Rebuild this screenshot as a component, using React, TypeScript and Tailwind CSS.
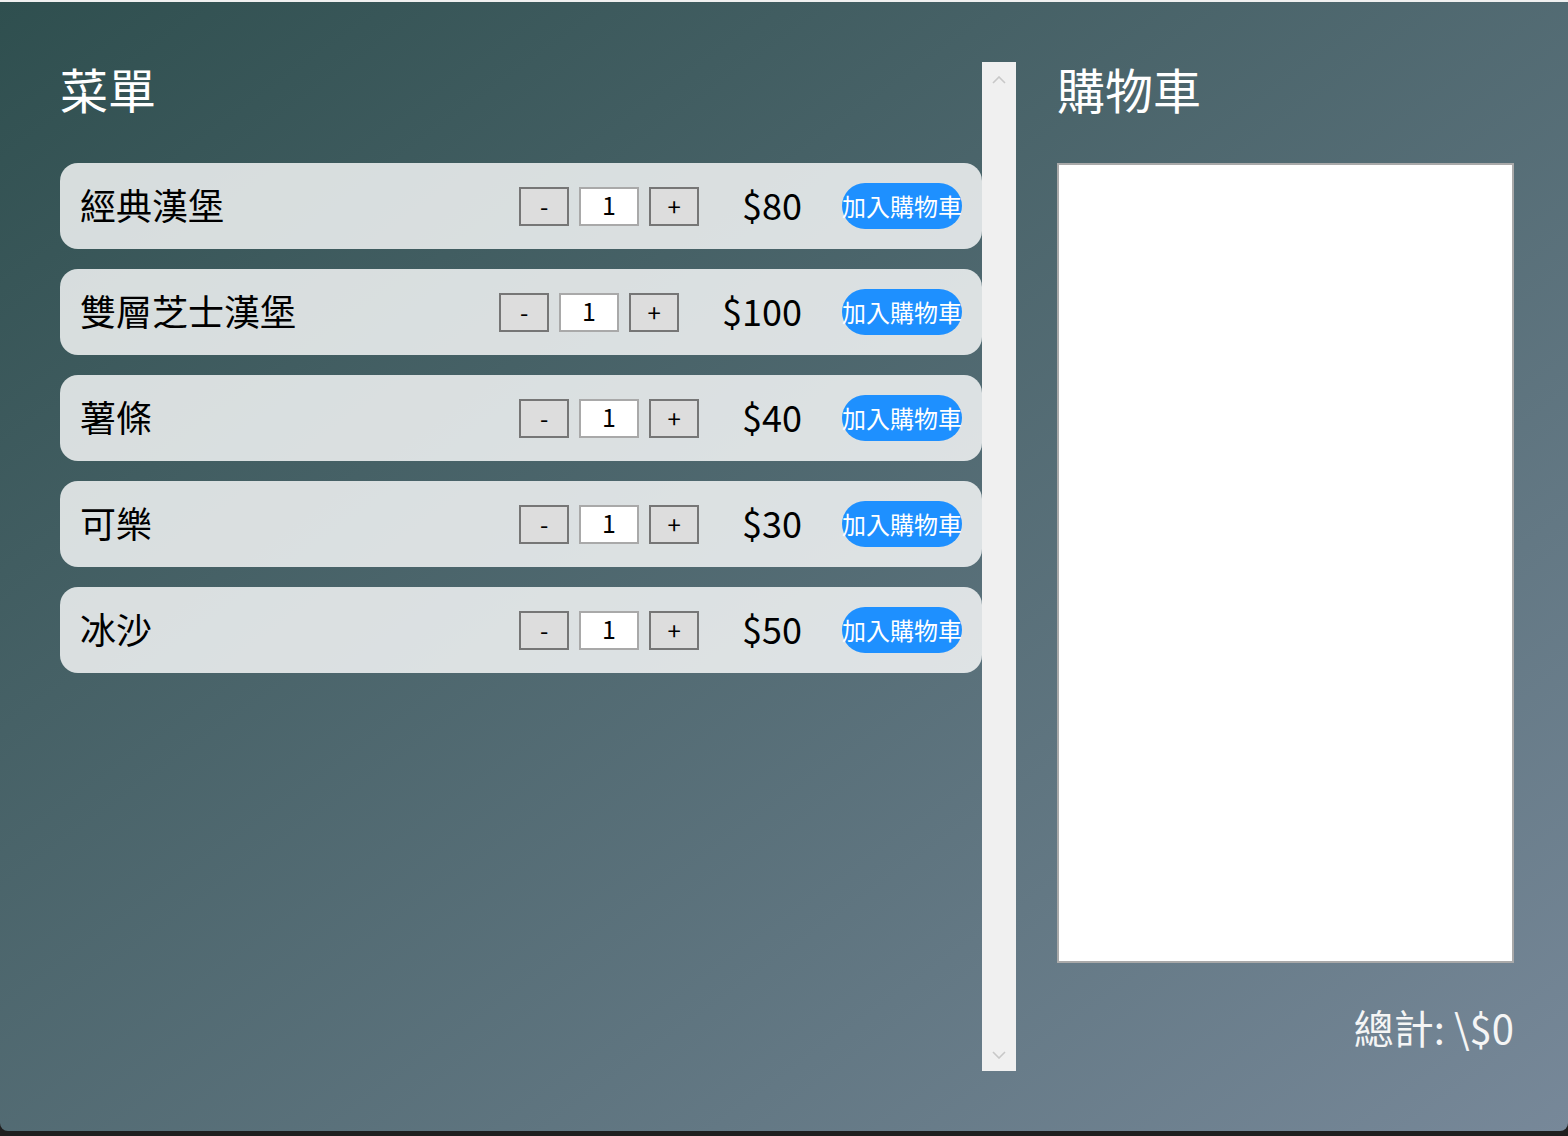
import { useState } from 'react';

interface MenuItem {
  id: number;
  name: string;
  price: number;
}

const menu: MenuItem[] = [
  { id: 1, name: '經典漢堡', price: 80 },
  { id: 2, name: '雙層芝士漢堡', price: 100 },
  { id: 3, name: '薯條', price: 40 },
  { id: 4, name: '可樂', price: 30 },
  { id: 5, name: '冰沙', price: 50 },
];

function MenuRow({ item }: { item: MenuItem }) {
  const [qty, setQty] = useState(1);

  return (
    <div className="flex items-center h-[86px] pl-5 pr-5 rounded-[18px] bg-white/80">
      <span className="flex-1 mb-[5px] text-[36px] leading-[44px] text-black">{item.name}</span>
      <div className="flex items-center gap-[10px]">
        <button
          onClick={() => setQty(Math.max(1, qty - 1))}
          className="w-[50px] h-[39px] border-2 border-[#767676] bg-[#dddddd] text-[24px] leading-none text-black"
        >
          -
        </button>
        <input
          value={qty}
          readOnly
          className="w-[60px] h-[39px] pb-[4px] border-2 border-[#a9a9a9] bg-white text-center text-[25px] leading-none text-black outline-none"
        />
        <button
          onClick={() => setQty(qty + 1)}
          className="w-[50px] h-[39px] border-2 border-[#767676] bg-[#dddddd] text-[24px] leading-none text-black"
        >
          +
        </button>
      </div>
      <span className="ml-[43px] mb-[4px] text-[36px] leading-[44px] text-black">${item.price}</span>
      <button className="ml-10 w-[120px] h-[46px] rounded-full bg-[#1e90ff] text-white text-[24px] leading-none whitespace-nowrap flex items-center justify-center">
        加入購物車
      </button>
    </div>
  );
}

export default function App() {
  const total = 0;

  return (
    <div
      className="w-[1568px] h-[1136px] bg-[#1f1f1f] flex flex-col"
      style={{ fontFamily: '"Noto Sans CJK TC", "Noto Sans", sans-serif' }}
    >
      <div className="h-[2px] bg-[#f0f0f0]" />
      <div className="h-[1129px] rounded-b-lg bg-linear-to-br from-[#2f4f4f] to-[#778899] flex gap-[41px] pl-[60px] pr-[54px] pt-[60px]">
        {/* Menu */}
        <div className="flex w-[956px] h-[1009px] shrink-0">
          <div className="w-[922px]">
            <h2 className="h-[101px] text-[48px] leading-[52px] text-white">菜單</h2>
            <div className="flex flex-col gap-5">
              {menu.map((item) => (
                <MenuRow key={item.id} item={item} />
              ))}
            </div>
          </div>
          {/* scrollbar */}
          <div className="w-[34px] bg-[#f0f0f0] flex flex-col justify-between items-center pt-[14px] pb-[12px]">
            <svg width="14" height="8" viewBox="0 0 14 8">
              <polyline points="1,7 7,1 13,7" fill="none" stroke="#c8c8c8" strokeWidth="1.6" />
            </svg>
            <svg width="14" height="8" viewBox="0 0 14 8">
              <polyline points="1,1 7,7 13,1" fill="none" stroke="#c8c8c8" strokeWidth="1.6" />
            </svg>
          </div>
        </div>

        {/* Cart */}
        <div className="w-[457px] shrink-0 flex flex-col">
          <h2 className="h-[101px] text-[48px] leading-[52px] text-white">購物車</h2>
          <div className="h-[800px] border-2 border-[#a9a9a9] bg-white" />
          <p className="mt-[34px] text-right text-[40px] leading-[60px] text-[#f5f5f5]">
            總計: \${total}
          </p>
        </div>
      </div>
    </div>
  );
}
